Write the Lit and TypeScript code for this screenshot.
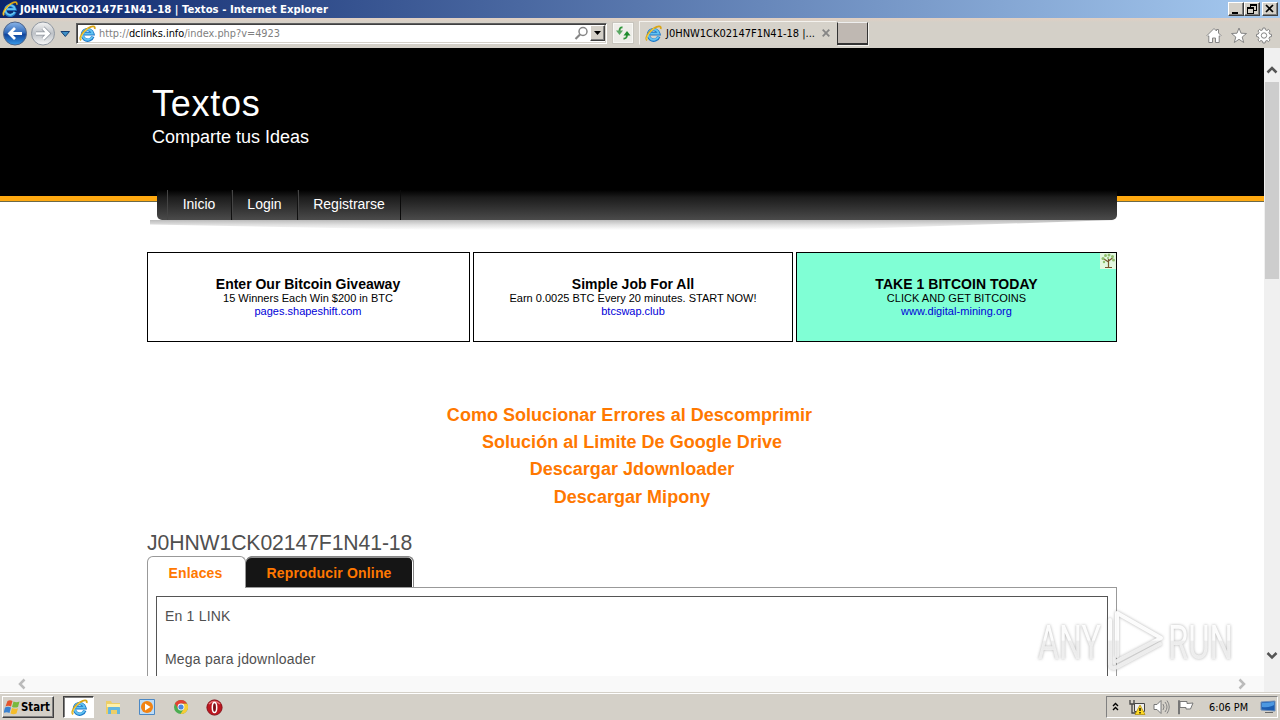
import { LitElement, html, css, svg } from "lit";
import { customElement } from "lit/decorators.js";

const label = (text: string, width: number, cls = "") => html`
  <svg class="label ${cls}" width=${width} height="16">
    <text x="0" y="12" textLength=${width} lengthAdjust="spacingAndGlyphs">${text}</text>
  </svg>`;

const ieIcon = (size: number) => html`
  <svg class="icon" width=${size} height=${size} viewBox="0 0 18 18">
    <path d="M14.6 12.2A5.6 5.6 0 1 1 14.7 9.3H5.6" fill="none" stroke="#1c78c8" stroke-width="3.6"/>
    <path d="M14.2 12.2A5.4 5.4 0 1 1 14.5 9.1H5.6" fill="none" stroke="#62c3f2" stroke-width="2"/>
    <path d="M2.3 16.2C-.5 14.2 4 7 9.5 3.4C14 .5 17.4.6 16.6 4.2" fill="none" stroke="#d9a514" stroke-width="1.9"/>
    <path d="M2.3 15.6C.6 13.8 5 7 9.8 3.6" fill="none" stroke="#ffe164" stroke-width=".9"/>
  </svg>`;

const ads = [
  { cls: "a1", title: "Enter Our Bitcoin Giveaway", text: "15 Winners Each Win $200 in BTC", link: "pages.shapeshift.com" },
  { cls: "a2", title: "Simple Job For All", text: "Earn 0.0025 BTC Every 20 minutes. START NOW!", link: "btcswap.club" },
  { cls: "a3", title: "TAKE 1 BITCOIN TODAY", text: "CLICK AND GET BITCOINS", link: "www.digital-mining.org" },
];
const guides = [
  "Como Solucionar Errores al Descomprimir",
  "Solución al Limite De Google Drive",
  "Descargar Jdownloader",
  "Descargar Mipony",
];

@customElement("ie-chrome")
export class IeChrome extends LitElement {
  static styles = css`
    :host { display: block; height: 48px; background: #d4d0c8; }
    svg { display: block; flex: none; }
    .label { overflow: visible; font: 11px "DejaVu Sans Condensed", "DejaVu Sans", sans-serif; }
    .title { height: 18px; display: flex; align-items: center; background: linear-gradient(90deg, #0b256b, #a6caf0); padding: 0 2px; box-sizing: border-box; }
    .title .label { fill: #fff; font-weight: bold; margin-left: 2px; margin-right: auto; }
    .win { width: 16px; height: 14px; box-sizing: border-box; background: #d4d0c8; border: 1px solid; border-color: #fff #404040 #404040 #fff; box-shadow: inset -1px -1px #808080; }
    .win.last { margin-left: 2px; }
    .bar { height: 30px; display: flex; align-items: center; padding-left: 3px; box-sizing: border-box; background: linear-gradient(#e2cfc2, #d4d0c8 4px); }
    .addr { width: 531px; height: 21px; margin-left: 5px; box-sizing: border-box; display: flex; align-items: center; background: #fff; border: 1px solid; border-color: #606060 #fff #fff #606060; box-shadow: inset 1px 1px #404040, inset -1px -1px #d4d0c8; padding: 0 1px 0 2px; }
    .addr .label { margin-left: 3px; fill: #808080; margin-right: auto; }
    .host { fill: #000; }
    .drop { width: 15px; height: 16px; margin-left: 1px; background: #d4d0c8; box-sizing: border-box; border: 1px solid; border-color: #fff #404040 #404040 #fff; box-shadow: inset -1px -1px #808080; }
    .refresh { width: 20px; height: 20px; margin-left: 6px; background: #eeede9; border: 1px solid #f8f8f5; box-sizing: border-box; outline: 1px solid #c8c5be; }
    .tab { width: 198px; height: 24px; margin-left: 6px; display: flex; align-items: center; box-sizing: border-box; border: 1px solid; border-color: #f4f2ee transparent transparent #f4f2ee; padding-left: 5px; background: #d6d2ca; }
    .tab .label { margin: 0 7px 0 4px; }
    .newtab { width: 31px; height: 23px; box-sizing: border-box; background: #bfb8b2; border: 1px solid #333; border-top-color: #eee; border-bottom-width: 2px; box-shadow: 1px 1px #f4f2ee; }
    .tools { display: flex; gap: 9px; margin-left: auto; margin-right: 8px; padding-top: 4px; }
  `;
  render() {
    return html`
      <div class="title">
        ${ieIcon(16)}
        ${label("J0HNW1CK02147F1N41-18 | Textos - Internet Explorer", 308)}
        <div class="win"><svg width="14" height="12"><path d="M3 9h6v2h-6z"/></svg></div>
        <div class="win"><svg width="14" height="12" fill="none" stroke="#000" shape-rendering="crispEdges"><path d="M5 4V1.5h6.500V7H9M5 2.500h6M2.500 4.500h6v6h-6zM2.500 5.500h6"/></svg></div>
        <div class="win last"><svg width="14" height="12"><path d="M3 2l7 7M10 2l-7 7" stroke="#000" stroke-width="1.700"/></svg></div>
      </div>
      <div class="bar">
        <svg width="54" height="27" viewBox="0 0 54 27">
          <defs>
            <linearGradient id="b" x2="0" y2="1"><stop offset="0" stop-color="#8ab5e8"/><stop offset=".45" stop-color="#346dbd"/><stop offset=".55" stop-color="#12459c"/><stop offset="1" stop-color="#389bea"/></linearGradient>
            <linearGradient id="g" x2="0" y2="1"><stop offset="0" stop-color="#f4f4f4"/><stop offset=".5" stop-color="#bec2c7"/><stop offset="1" stop-color="#f8f8f8"/></linearGradient>
          </defs>
          <circle cx="12" cy="13.500" r="11.500" fill="url(#b)" stroke="#4f6488"/>
          <circle cx="40" cy="13.500" r="11.500" fill="url(#g)" stroke="#9097a0"/>
          <path d="M19 13.500H7M12 8l-5.500 5.500L12 19" fill="none" stroke="#fff" stroke-width="2.800"/>
          <path d="M33 13.500h12M40 8l5.500 5.500L40 19" fill="none" stroke="#8e949c" stroke-width="4"/>
          <path d="M33 13.500h12M40 8l5.500 5.500L40 19" fill="none" stroke="#fff" stroke-width="2.600"/>
        </svg>
        <svg width="14" height="10"><path d="M4 3.500h8.500L8.300 8.500z" fill="#3d8fc6" stroke="#153f73"/></svg>
        <div class="addr">
          ${ieIcon(17)}
          <svg class="label" width="181" height="16"><text y="12" textLength="181" lengthAdjust="spacingAndGlyphs">http://<tspan class="host">dclinks.info</tspan>/index.php?v=4923</text></svg>
          <svg width="15" height="15" fill="none" stroke="#858585"><circle cx="9" cy="5.500" r="4" stroke-width="1.500"/><path d="M6 8.500l-4.500 4.500" stroke-width="2.200"/></svg>
          <div class="drop"><svg width="13" height="14"><path d="M3 5h7l-3.500 4z"/></svg></div>
        </div>
        <div class="refresh"><svg width="18" height="18"><g fill="none" stroke="#2f963b" stroke-width="1.800"><path d="M8.500 3.500Q5.500 3 5.500 7"/><path d="M9.500 14.500Q13 15 13 10.500"/></g><path d="M2 6.500h7L5.500 11z" fill="#5aa864"/><path d="M9.500 11.500h7L13 7z" fill="#1d8a2c"/></svg></div>
        <div class="tab">
          ${ieIcon(17)}
          ${label("J0HNW1CK02147F1N41-18 |...", 149)}
          <svg width="8" height="8"><path d="M.7.7l6.600 6.600M7.300.7L.7 7.300" stroke="#858585" stroke-width="1.800"/></svg>
        </div>
        <div class="newtab"></div>
        <div class="tools">
          <svg width="16" height="17" viewBox="0 0 16 17" fill="#fff" stroke="#858585"><path d="M1 8.500L8 1.500l2.500 2.500V2.500h2V6L15 8.500l-1 1-.8-.7V15.500H9.500V11h-3v4.500H2.800V8.800L2 9.500z"/></svg>
          <svg width="16" height="17" viewBox="0 0 16 17" fill="#fff" stroke="#858585"><path d="M8 1l2 5.200 5.500.3-4.300 3.500 1.500 5.500L8 12.300l-4.700 3.200L4.800 10 .5 6.500 6 6.200z"/></svg>
          <svg width="16" height="17" viewBox="-8 -8.500 16 17" fill="#fff" stroke="#858585">
            <path d="M-1.400-5.700-1.100-7.500h2.200l.3 1.800 1.600.7 1.500-1.100 1.600 1.600L5-3l.7 1.600 1.800.3v2.200l-1.800.3L5 3l1.100 1.500-1.600 1.600L3 5l-1.600.7-.3 1.800h-2.200l-.3-1.800L-3 5l-1.500 1.100-1.600-1.600L-5 3l-.7-1.600-1.800-.3v-2.200l1.800-.3L-5-3l-1.100-1.500 1.600-1.600L-3-5z"/><circle r="2.700"/></svg>
        </div>
      </div>`;
  }
}

@customElement("web-page")
export class WebPage extends LitElement {
  static styles = css`
    :host { display: block; width: 1264px; height: 628px; overflow: hidden; background: #fff; color: #505050; font-family: "Liberation Sans", Arial, sans-serif; }
    .head { height: 153px; background: #000; color: #fff; border-bottom: 5px solid #ffa910; padding: 35px 0 0 152px; box-sizing: border-box; }
    .site { font-size: 36px; line-height: 42px; letter-spacing: .75px; }
    .tag { font-size: 18px; line-height: 24px; }
    .rule { height: 1px; background: #6c6a48; }
    .wrap { width: 970px; margin-left: 147px; }
    .nav { position: relative; width: 960px; height: 30px; margin: -12px 0 0 10px; padding-left: 10px; box-sizing: border-box; display: flex; background: linear-gradient(#000, #1c1c1c 25%, #4b4b4b); border-radius: 0 0 5px 5px; color: #fff; font-size: 14px; line-height: 28px; }
    .nav span { box-sizing: border-box; text-align: center; border-right: 1px solid #111; border-left: 1px solid #444; }
    .nav .n1 { width: 65px; padding-right: 1px; } .nav .n2 { width: 66px; padding-right: 1px; } .nav .n3 { width: 103px; padding-right: 1px; border-right-color: #0a0a0a; }
    .shade { height: 10px; width: 965px; margin-left: 3px; background: linear-gradient(#bbb, #e2e2e2 50%, #fff); clip-path: polygon(0 0, 100% 0, 70% 100%, 30% 100%, 0 45%); }
    .ads { display: flex; gap: 3px; margin-top: 22px; }
    .ad { height: 90px; box-sizing: border-box; border: 1px solid #000; text-align: center; padding: 24px 1px 0 0; font-size: 11px; line-height: 13px; color: #000; position: relative; }
    .ad b { display: block; font-size: 14px; line-height: 15px; }
    .ad a { display: block; color: #0000d8; }
    .a1 { width: 323px; } .a2 { width: 320px; padding-right: 0; } .a3 { width: 321px; padding-right: 0; background: #80ffd5; letter-spacing: .04px; }
    .tree { position: absolute; right: 0; top: 0; background: #e2f7df; }
    .guides { margin-top: 60px; text-align: center; color: #ff7800; font-weight: bold; font-size: 18px; line-height: 27px; letter-spacing: .03px; }
    .guides div:first-child { padding-right: 5px; }
    .guides div:last-child { padding-top: 1px; }
    h2 { margin: 19px 0 0; font-weight: normal; font-size: 21.200px; line-height: 26px; letter-spacing: -.1px; }
    .tabs { display: flex; position: relative; height: 32px; font-size: 14px; font-weight: bold; color: #ff7800; line-height: 33px; text-align: center; }
    .on { width: 99px; box-sizing: border-box; border: 1px solid #999; border-bottom: 0; border-radius: 6px 6px 0 0; background: #fff; padding-right: 2px; letter-spacing: .15px; }
    .off { width: 168px; height: 31px; box-sizing: border-box; background: #151515; border: 1px solid #888; border-left-width: 0; border-bottom: 0; box-shadow: inset 0 1px #fff8, inset -1px 0 #fff; border-radius: 6px 6px 0 0; letter-spacing: .18px; padding-right: 1px; }
    .panel { border: 1px solid #999; padding: 8px; margin-top: -1px; height: 200px; }
    .inner { border: 1px solid #555; height: 200px; padding: 9px 8px; font-size: 14px; line-height: 21.400px; letter-spacing: .2px; }
  `;
  render() {
    return html`
      <div class="head"><div class="site">Textos</div><div class="tag">Comparte tus Ideas</div></div>
      <div class="rule"></div>
      <div class="wrap">
        <div class="nav"><span class="n1">Inicio</span><span class="n2">Login</span><span class="n3">Registrarse</span></div>
        <div class="shade"></div>
        <div class="ads">
          ${ads.map((a) => html`<div class="ad ${a.cls}"><b>${a.title}</b>${a.text}<a>${a.link}</a>
            ${a.cls === "a3" ? html`<svg class="tree" width="16" height="16"><path d="M8.500 14V6M8.500 9L4 6M8.500 8l4-3M5 14.500h7" stroke="#76552c" stroke-width="1.200" fill="none"/><g fill="#8fbe6c"><circle cx="3" cy="5.500" r="1.500"/><circle cx="5.500" cy="2.500" r="1.500"/><circle cx="9" cy="2" r="1.500"/><circle cx="12.500" cy="3.500" r="1.500"/><circle cx="13.500" cy="7" r="1.500"/><circle cx="4" cy="9" r="1.200"/><circle cx="8" cy="5" r="1"/></g></svg>` : ""}</div>`)}
        </div>
        <div class="guides">${guides.map((g) => html`<div>${g}</div>`)}</div>
        <h2>J0HNW1CK02147F1N41-18</h2>
        <div class="tabs"><div class="on">Enlaces</div><div class="off">Reproducir Online</div></div>
        <div class="panel"><div class="inner">En 1 LINK<br><br>Mega para jdownloader</div></div>
      </div>`;
  }
}

@customElement("task-bar")
export class TaskBar extends LitElement {
  static styles = css`
    :host { display: flex; align-items: center; height: 28px; box-sizing: border-box; background: #d4d0c8; border-top: 1px solid #d4d0c8; box-shadow: inset 0 1px #fff; padding: 1px 2px 0; }
    svg { display: block; flex: none; }
    .label { overflow: visible; font: 11px "DejaVu Sans Condensed", "DejaVu Sans", sans-serif; }
    .start { width: 52px; height: 22px; box-sizing: border-box; border: 1px solid; border-color: #fff #404040 #404040 #fff; box-shadow: inset -1px -1px #808080; display: flex; align-items: center; padding-left: 1px; }
    .start .label { font-weight: bold; font-size: 12px; }
    .active { width: 31px; height: 22px; margin-left: 9px; box-sizing: border-box; border: 1px solid; border-color: #404040 #fff #fff #404040; box-shadow: inset 1px 1px #808080; background: #fff; display: flex; align-items: center; justify-content: center; padding-left: 1px; }
    .apps { display: flex; align-items: center; gap: 17px; margin-left: 11px; }
    .tray { margin-left: auto; height: 22px; width: 172px; box-sizing: border-box; border: 1px solid; border-color: #808080 #fff #fff #808080; display: flex; align-items: center; padding-left: 5px; }
    .net { margin-left: 10px; } .vol { margin-left: 7px; } .flag { margin-left: 7px; }
    .time { margin-left: 15px; } .desk { margin-left: 12px; }
  `;
  render() {
    return html`
      <div class="start">
        <svg width="17" height="16" viewBox="0 0 17 16"><path d="M3.500 2Q6 .5 8.500 2L7 7.500Q4 6 1.500 7.500z" fill="#e5552c"/><path d="M9.500 2.500q3 1.500 6 0L14 8q-3 1.200-6 0z" fill="#79b93c"/><path d="M1 8.500q3-1.500 6 0L5.500 14q-3-1.500-6 0z" fill="#3b82d0"/><path d="M8 9q3 1.400 6 .2L12.500 14.500q-3 1.300-6 0z" fill="#f5bd2b"/></svg>
        ${label("Start", 29)}
      </div>
      <div class="active">${ieIcon(17)}</div>
      <div class="apps">
        <svg width="17" height="17"><path d="M1 2h5l1 2h8v11H1z" fill="#ecce68"/><path d="M2 5h13v3H2z" fill="#fff1a8"/><path d="M3 15V9q0-1 1-1h10q1 0 1 1v6h-3v-4H6v4z" fill="#63b6df"/></svg>
        <svg width="17" height="17"><path d="M.5.500h15v15H.5z" fill="#bddcf7" stroke="#4c88c4"/><circle cx="8" cy="8" r="6" fill="#f28313"/><path d="M6 4.500l5.500 3.500L6 11.500z" fill="#fff"/></svg>
        <svg width="16" height="16" viewBox="0 0 16 16"><circle cx="8" cy="8" r="7" fill="#4bad51"/><path d="M1.900 4.500A7 7 0 0 1 14.200 4.700H8L5 9.500z" fill="#e34133"/><path d="M14.200 4.700A7 7 0 0 1 7.500 15L11 9.500 9.500 4.700z" fill="#f8cc36"/><circle cx="8" cy="8" r="3.400" fill="#fff"/><circle cx="8" cy="8" r="2.600" fill="#4b87df"/></svg>
        <svg width="17" height="17"><circle cx="8.500" cy="8.500" r="7.600" fill="#bd1720" stroke="#861019"/><path d="M3 5Q8 0 14 5" stroke="#e7777b" stroke-width="1.500" fill="none"/><ellipse cx="8.500" cy="8.500" rx="2.200" ry="5" fill="#7c0f17" stroke="#fff" stroke-width="1.500"/></svg>
      </div>
      <div class="tray">
        <svg width="7" height="11" fill="none" stroke="#000" stroke-width="1.400"><path d="M1 4l2.500-2.500L6 4M1 8l2.500-2.500L6 8"/></svg>
        <svg class="net" width="17" height="17"><path d="M5.500 4.500h10v8h-10z" fill="#eee" stroke="#444"/><path d="M1 1v4h4V1M3 5v9h5" stroke="#444" fill="none" stroke-width="1.300"/><path d="M11 6l5 9.500H6z" fill="#ffda25" stroke="#aa8700" stroke-width=".7"/><path d="M11 9v3m0 1v1.500" stroke="#000" stroke-width="1.300"/></svg>
        <svg class="vol" width="17" height="16"><path d="M1 5.500h3L8 1.500v13L4 10.500H1z" fill="#fff" stroke="#777"/><path d="M10 5q2 3 0 6M12 3q4 5 0 10M14 1.500q4.500 6.500 0 13" fill="none" stroke="#858585"/></svg>
        <svg class="flag" width="17" height="16"><path d="M1.500 15V1.500h1V15zM3 2.500h7v2l6-.5-2.500 6H9V8.500H3z" fill="#fff" stroke="#777"/></svg>
        <span class="time">${label("6:06 PM", 39)}</span>
        <svg class="desk" width="17" height="15"><path d="M1 2l14-1v10L1 10z" fill="#1b5cb0" stroke="#7190b8"/><path d="M2 3l12-1v3Q8 8 2 7z" fill="#4c98e1"/><path d="M5 12.500h8" stroke="#666"/></svg>
      </div>`;
  }
}

@customElement("app-root")
export class AppRoot extends LitElement {
  static styles = css`
    :host { display: block; position: relative; width: 1280px; height: 720px; overflow: hidden; background: #fff; }
    svg { display: block; }
    .view { display: flex; height: 628px; }
    .vbar { width: 16px; background: #f0f0f0; height: 644px; display: flex; flex-direction: column; align-items: center; padding-top: 16px; box-sizing: border-box; }
    .thumb { width: 14px; height: 197px; background: #cdcdcd; margin-top: 6px; }
    .down { margin-top: auto; padding-bottom: 31px; }
    .hbar { width: 1264px; height: 16px; box-sizing: border-box; display: flex; align-items: center; justify-content: space-between; padding: 0 17px; background: #f9f9f9; }
    .mark { position: absolute; left: 1034px; top: 604px; filter: drop-shadow(0 0 1.500px #7779); overflow: visible; }
  `;
  render() {
    const chev = (d: string, c: string) => svg`<path d=${d} fill="none" stroke=${c} stroke-width="2.500"/>`;
    return html`
      <ie-chrome></ie-chrome>
      <div class="view">
        <web-page></web-page>
        <div class="vbar">
          <svg width="12" height="12">${chev("M1.500 8.500L6 4l4.500 4.500", "#555")}</svg>
          <div class="thumb"></div>
          <svg class="down" width="12" height="10">${chev("M1.500 2L6 6.500L10.500 2", "#555")}</svg>
        </div>
      </div>
      <div class="hbar">
        <svg width="10" height="12">${chev("M7.500 1.500L3 6l4.500 4.500", "#bbb")}</svg>
        <svg width="10" height="12">${chev("M2.500 1.500L7 6l-4.500 4.500", "#bbb")}</svg>
      </div>
      <task-bar></task-bar>
      <svg class="mark" width="206" height="72" font-family="Roboto" font-size="49" font-weight="400">
        <defs><linearGradient id="m" gradientUnits="userSpaceOnUse" x1="0" y1="0" x2="0" y2="72"><stop offset=".5" stop-color="#fff" stop-opacity=".95"/><stop offset=".52" stop-color="#f2f2f2" stop-opacity=".9"/></linearGradient></defs>
        <g fill="url(#m)">
          <text x="4" y="55" textLength="63" lengthAdjust="spacingAndGlyphs">ANY</text>
          <text x="134" y="55" textLength="65" lengthAdjust="spacingAndGlyphs">RUN</text>
        </g>
        <g fill="none" stroke="url(#m)" stroke-width="4" stroke-linejoin="round" stroke-linecap="round">
          <path d="M83 52V9l44 25-44 23"/>
          <path d="M76 16v44q1 6 7 3l43-23"/>
        </g>
      </svg>`;
  }
}
